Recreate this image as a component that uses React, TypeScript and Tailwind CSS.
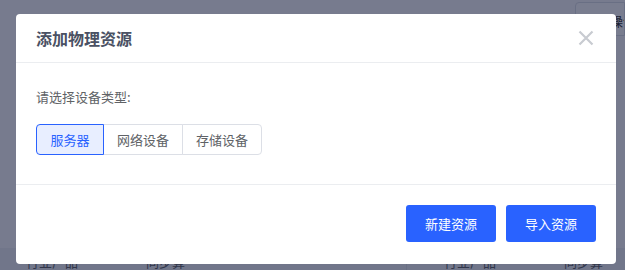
import { useState } from 'react';

const types = ['服务器', '网络设备', '存储设备'];

export default function App() {
  const [active, setActive] = useState(0);

  return (
    <div
      className="relative h-[270px] w-[625px] overflow-hidden bg-white"
      style={{ fontFamily: '"Noto Sans CJK SC", "Noto Sans", sans-serif' }}>
      {/* page behind the mask */}
      <div className="flex h-full flex-col bg-[#fafbfc]">
        <div className="flex justify-end pt-[2px]">
          <div className="h-[34px] w-[50px] overflow-hidden whitespace-nowrap rounded-l-[4px] border border-[#dcdfe6] bg-white pl-[34px] pt-[10px] text-[13px] leading-[16px] text-[#333]">
            操作
          </div>
        </div>
        <div className="mt-auto flex h-[22px] bg-[#eef0f4] pt-[6px] text-[13px] leading-[16px] text-[#606266]">
          <div className="flex w-[407px] gap-[68px] whitespace-nowrap border-r border-[#dcdfe6] pl-[26px]">
            <span>行业产品</span>
            <span>同步算</span>
          </div>
          <div className="flex gap-[68px] whitespace-nowrap pl-[37px]">
            <span>行业产品</span>
            <span>同步算</span>
          </div>
        </div>
      </div>

      {/* mask + dialog */}
      <div className="absolute inset-0 bg-[#0b1333]/55 pl-[16px] pt-[14px]">
        <div className="flex h-[250px] w-[600px] flex-col rounded-[4px] bg-white">
          <div className="flex h-[49px] items-center justify-between border-b border-[#ebedf0] pl-[20px] pr-[22px]">
            <span className="text-[16px] font-semibold text-[#4a5163]">添加物理资源</span>
            <svg width="16" height="16" viewBox="0 0 16 16" className="text-[#c8cbd1]">
              <path d="M1.5 1.5 L14.5 14.5 M14.5 1.5 L1.5 14.5" stroke="currentColor" strokeWidth="2.2" />
            </svg>
          </div>

          <div className="flex h-[122px] flex-col border-b border-[#ebedf0] px-[20px] pt-[24px]">
            <p className="text-[13px] leading-[20px] text-[#606266]">请选择设备类型:</p>
            <div className="mt-[17px] flex">
              {types.map((t, i) => (
                <button
                  key={t}
                  onClick={() => setActive(i)}
                  className={
                    i === active
                      ? 'z-10 h-[31px] w-[68px] rounded-l-[4px] border border-[#2962ff] bg-[#e8eeff] text-[13px] text-[#2962ff]'
                      : i === types.length - 1
                        ? '-ml-px h-[31px] w-[80px] rounded-r-[4px] border border-[#dcdfe6] bg-white text-[13px] text-[#606266]'
                        : '-ml-px h-[31px] w-[80px] border border-[#dcdfe6] bg-white text-[13px] text-[#606266]'
                  }>
                  {t}
                </button>
              ))}
            </div>
          </div>

          <div className="flex flex-1 items-start justify-end gap-[10px] pr-[20px] pt-[20px]">
            <button className="h-[37px] w-[90px] rounded-[3px] bg-[#2962ff] text-[13px] text-white">新建资源</button>
            <button className="h-[37px] w-[90px] rounded-[3px] bg-[#2962ff] text-[13px] text-white">导入资源</button>
          </div>
        </div>
      </div>
    </div>
  );
}
